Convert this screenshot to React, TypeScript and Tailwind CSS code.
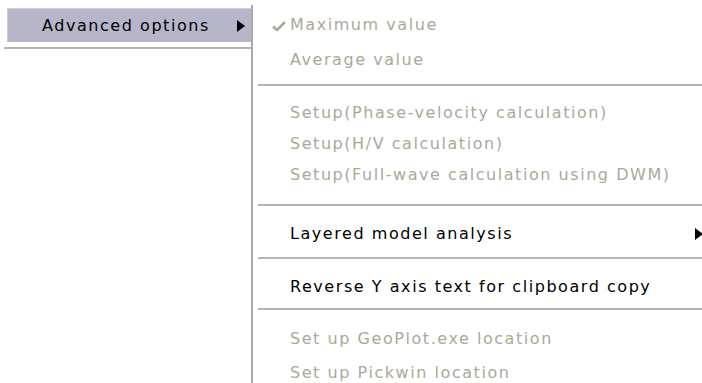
import React from "react";

type Row =
  | { kind: "item"; label: string; h: string; disabled?: boolean; checked?: boolean; submenu?: boolean }
  | { kind: "sep"; cls: string };

// submenu rows, heights tuned to the screenshot
const ROWS: Row[] = [
  { kind: "item", label: "Maximum value", h: "h-[37px]", disabled: true, checked: true },
  { kind: "item", label: "Average value", h: "h-[33px]", disabled: true },
  { kind: "sep", cls: "pt-[8px] pb-[11px]" },
  { kind: "item", label: "Setup(Phase-velocity calculation)", h: "h-[31px]", disabled: true },
  { kind: "item", label: "Setup(H/V calculation)", h: "h-[31px]", disabled: true },
  { kind: "item", label: "Setup(Full-wave calculation using DWM)", h: "h-[31px]", disabled: true },
  { kind: "sep", cls: "pt-[14px] pb-[12px]" },
  { kind: "item", label: "Layered model analysis", h: "h-[31px]", submenu: true },
  { kind: "sep", cls: "pt-[8px] pb-[12px]" },
  { kind: "item", label: "Reverse Y axis text for clipboard copy", h: "h-[31px]" },
  { kind: "sep", cls: "pt-[6px] pb-[13px]" },
  { kind: "item", label: "Set up GeoPlot.exe location", h: "h-[31px]", disabled: true },
  { kind: "item", label: "Set up Pickwin location", h: "h-[37px]", disabled: true },
];

function Arrow() {
  return (
    <svg width="8" height="12" viewBox="0 0 8 12" aria-hidden="true">
      <path d="M0 0 L8 6 L0 12 Z" fill="#000" />
    </svg>
  );
}

function Check() {
  return (
    <svg width="14" height="11" viewBox="0 0 14 11" aria-hidden="true">
      <path d="M1 5.5 L5 9 L13 1" fill="none" stroke="#aca899" strokeWidth="2.6" strokeLinejoin="round" />
    </svg>
  );
}

export default function App() {
  return (
    <div
      className="flex h-[383px] w-[702px] overflow-hidden bg-white text-[16px] tracking-[1.55px]"
      style={{ fontFamily: '"DejaVu Sans", Tahoma, sans-serif' }}
    >
      {/* parent menu, only the highlighted entry is visible */}
      <div className="w-[251px] shrink-0 pl-[4px] pt-[8px]">
        <div className="ml-[3px] flex h-[34px] items-center border-t border-l border-[#cfcddb] bg-[#b7b5c9] pl-[34px] pr-[6px] text-black">
          <span>Advanced options</span>
          <span className="ml-auto flex">
            <Arrow />
          </span>
        </div>
        <div className="mt-[5px] h-[2px] bg-[#b4b4b4]" />
      </div>

      <div className="mt-[5px] w-[2px] shrink-0 bg-[#aaaaaa]" />

      {/* submenu */}
      <div className="flex-1 pt-[6px]">
        {ROWS.map((r, i) =>
          r.kind === "sep" ? (
            <div key={i} className={`pl-[5px] ${r.cls}`}>
              <div className="h-[2px] bg-[#b4b4b4]" />
            </div>
          ) : (
            <div
              key={i}
              className={`relative flex items-center whitespace-nowrap pl-[37px] ${r.h} ${
                r.disabled ? "text-[#aca899]" : "text-black"
              }`}
            >
              {r.checked ? (
                <span className="absolute left-[19px] top-[15px] flex">
                  <Check />
                </span>
              ) : null}
              <span>{r.label}</span>
              {r.submenu ? (
                <span className="ml-auto flex -mr-[1px]">
                  <Arrow />
                </span>
              ) : null}
            </div>
          )
        )}
      </div>
    </div>
  );
}
